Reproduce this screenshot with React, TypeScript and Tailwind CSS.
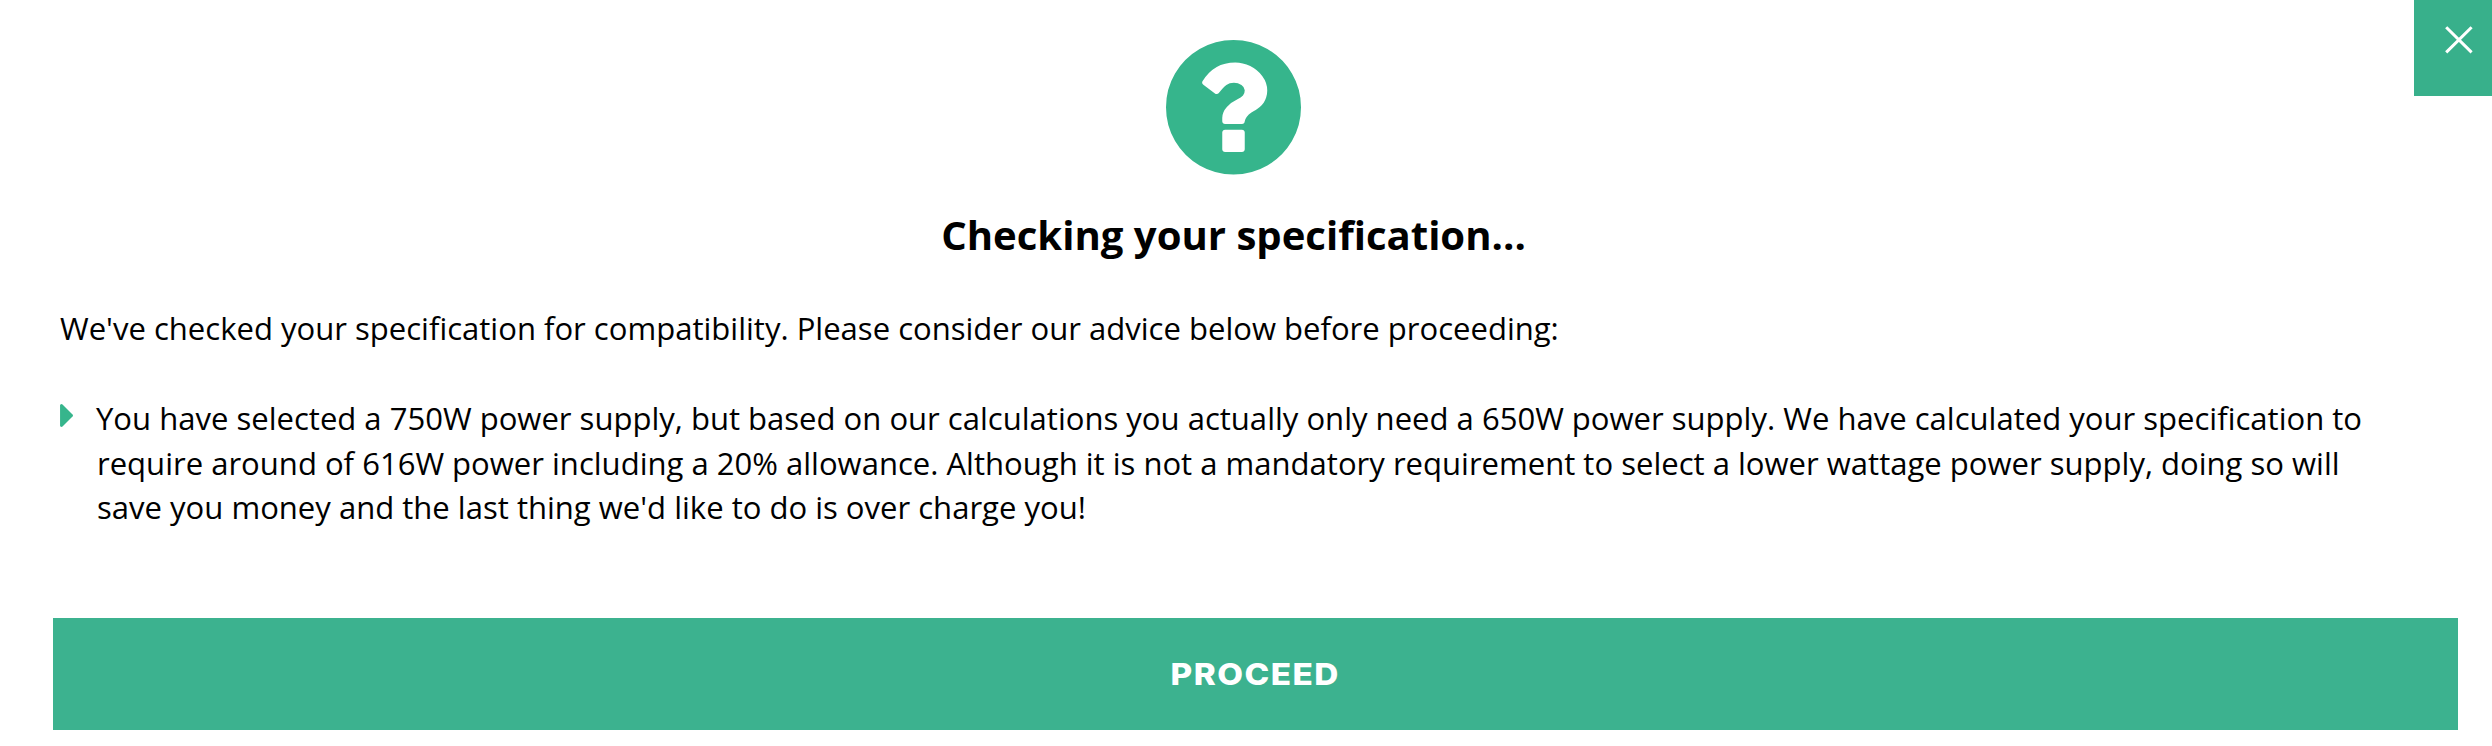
function QuestionCircle() {
  return (
    <svg viewBox="128 128 1536 1536" preserveAspectRatio="none" className="h-[134.5px] w-[135px] fill-[#36b58c]">
      <path
        fillRule="evenodd"
        d="M1024 1376v-192q0-14-9-23t-23-9h-192q-14 0-23 9t-9 23v192q0 14 9 23t23 9h192q14 0 23-9t9-23zm256-672q0-88-55.5-163t-138.5-116-170-41q-243 0-371 213-15 24 8 42l132 100q7 6 19 6 16 0 25-12 53-68 86-92 34-24 86-24 48 0 85.5 26t37.5 59q0 38-20 61t-68 45q-63 28-115.5 86.5t-52.5 125.5v36q0 14 9 23t23 9h192q14 0 23-9t9-23q0-19 21.5-49.5t54.5-49.5q32-18 49-28.5t46-35 44.5-48 28-60.5 12.5-81zm384 192q0 209-103 385.5t-279.5 279.5-385.5 103-385.5-103-279.5-279.5-103-385.5 103-385.5 279.5-279.5 385.5-103 385.5 103 279.5 279.5 103 385.5z"
      />
    </svg>
  );
}

function CaretRight() {
  return (
    <svg viewBox="576 384 576 1024" className="mt-[8px] h-[23px] w-[13px] shrink-0 fill-[#36b58c]">
      <path d="M1152 896q0 26-19 45l-448 448q-19 19-45 19t-45-19-19-45v-896q0-26 19-45t45-19 45 19l448 448q19 19 19 45z" />
    </svg>
  );
}

export default function App() {
  return (
    <main className="relative flex h-[746px] w-[2492px] flex-col bg-white font-['Open_Sans',sans-serif] text-black">
      <button
        aria-label="Close"
        className="absolute top-0 right-0 flex h-24 w-[78px] bg-[#38b08b] pt-[26px] pl-[31px]"
      >
        <svg viewBox="0 0 28 28" className="h-7 w-7" fill="none" stroke="#fff" strokeWidth="3">
          <path d="M1.2 1.2 26.6 26.4M26.6 1.2 1.2 26.4" />
        </svg>
      </button>

      <header className="flex w-[2467px] flex-col items-center pt-10">
        <QuestionCircle />
        <h1 className="mt-[32px] text-[40.1px] leading-[56px] font-bold">Checking your specification...</h1>
      </header>

      <section className="flex flex-col pt-[43px] pl-[60px] text-[31.05px] leading-[44.6px]">
        <p>We've checked your specification for compatibility. Please consider our advice below before proceeding:</p>
        <div className="mt-[46px] flex">
          <CaretRight />
          <p className="ml-[24px] -indent-px whitespace-nowrap">
            You have selected a 750W power supply, but based on our calculations you actually only need a 650W power
            supply. We have calculated your specification to
            <br />
            require around of 616W power including a 20% allowance. Although it is not a mandatory requirement to select
            a lower wattage power supply, doing so will
            <br />
            save you money and the last thing we'd like to do is over charge you!
          </p>
        </div>
      </section>

      <button className="mt-auto mb-4 ml-[53px] flex h-28 w-[2405px] items-center justify-center bg-[#3cb28f] font-['Inter',sans-serif] text-[30px] font-[850] tracking-[1.3px] text-white">
        <span className="scale-x-[1.11]">PROCEED</span>
      </button>
    </main>
  );
}
